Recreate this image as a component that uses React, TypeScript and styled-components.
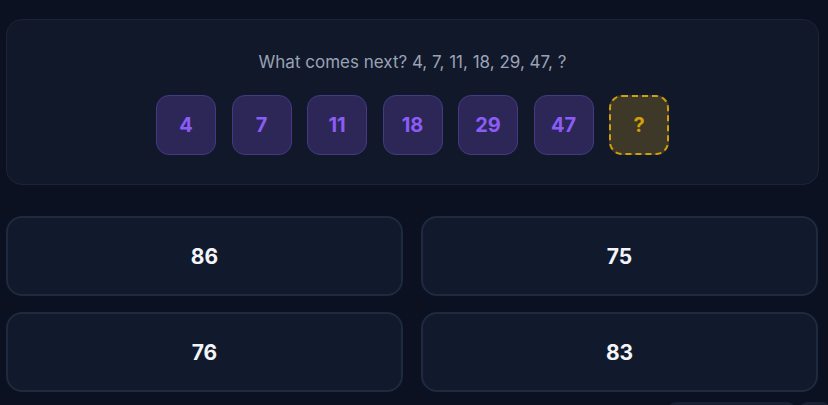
import styled, { createGlobalStyle } from "styled-components";

const GlobalStyle = createGlobalStyle`
  * { box-sizing: border-box; }
  html, body {
    margin: 0;
    background: #0b1120;
    font-family: Inter, "Noto Sans", "DejaVu Sans", sans-serif;
  }
`;

const sequence = [4, 7, 11, 18, 29, 47];
const options = [86, 75, 76, 83];

const App = () => {
  return (
    <>
      <GlobalStyle />
      <Page>
        <PuzzleCard>
          <Question>What comes next? 4, 7, 11, 18, 29, 47, ?</Question>
          <TileRow>
            {sequence.map((n) => (
              <Tile key={n}>{n}</Tile>
            ))}
            <Tile $unknown>?</Tile>
          </TileRow>
        </PuzzleCard>
        <OptionGrid>
          {options.map((o) => (
            <OptionButton key={o}>{o}</OptionButton>
          ))}
        </OptionGrid>
        <Footer>
          <FooterButton $width={127} />
          <FooterButton $width={30} />
        </Footer>
      </Page>
    </>
  );
};

const Page = styled.main`
  padding: 19px 9px 0 6px;
  display: flex;
  flex-direction: column;
  height: 405px;
  overflow: hidden;
`;

const PuzzleCard = styled.section`
  background: #111829;
  border: 1px solid #1c2438;
  border-radius: 16px;
  padding: 32px 20px 29px;
  display: flex;
  flex-direction: column;
  align-items: center;
  gap: 22px;
`;

const Question = styled.p`
  margin: 0;
  color: #9aa2b6;
  font-size: 17px;
  line-height: 21px;
`;

const TileRow = styled.div`
  display: flex;
  gap: 15.5px;
`;

const Tile = styled.div<{ $unknown?: boolean }>`
  width: 60px;
  height: 60px;
  border-radius: 13px;
  display: flex;
  align-items: center;
  justify-content: center;
  font-size: 20px;
  font-weight: 700;
  background: ${(p) => (p.$unknown ? "#3d3827" : "#2c2757")};
  border: ${(p) => (p.$unknown ? "2px dashed #d19e0c" : "1px solid #433a86")};
  color: ${(p) => (p.$unknown ? "#d19e0c" : "#8b5cf6")};
`;

const OptionGrid = styled.div`
  margin-top: 31px;
  display: grid;
  grid-template-columns: 1fr 1fr;
  column-gap: 18px;
  row-gap: 16px;
  padding-right: 1px;
`;

const OptionButton = styled.button`
  height: 80px;
  border-radius: 16px;
  background: #111a2d;
  border: 2px solid #1f2a3e;
  color: #f3f5f9;
  font-family: inherit;
  font-size: 21px;
  font-weight: 700;
  cursor: pointer;
`;

const Footer = styled.div`
  margin-top: 10px;
  margin-right: -11px;
  display: flex;
  justify-content: flex-end;
  gap: 5px;
`;

const FooterButton = styled.div<{ $width: number }>`
  width: ${(p) => p.$width}px;
  height: 30px;
  border-radius: 8px;
  background: #182134;
  flex-shrink: 0;
`;

export default App;
